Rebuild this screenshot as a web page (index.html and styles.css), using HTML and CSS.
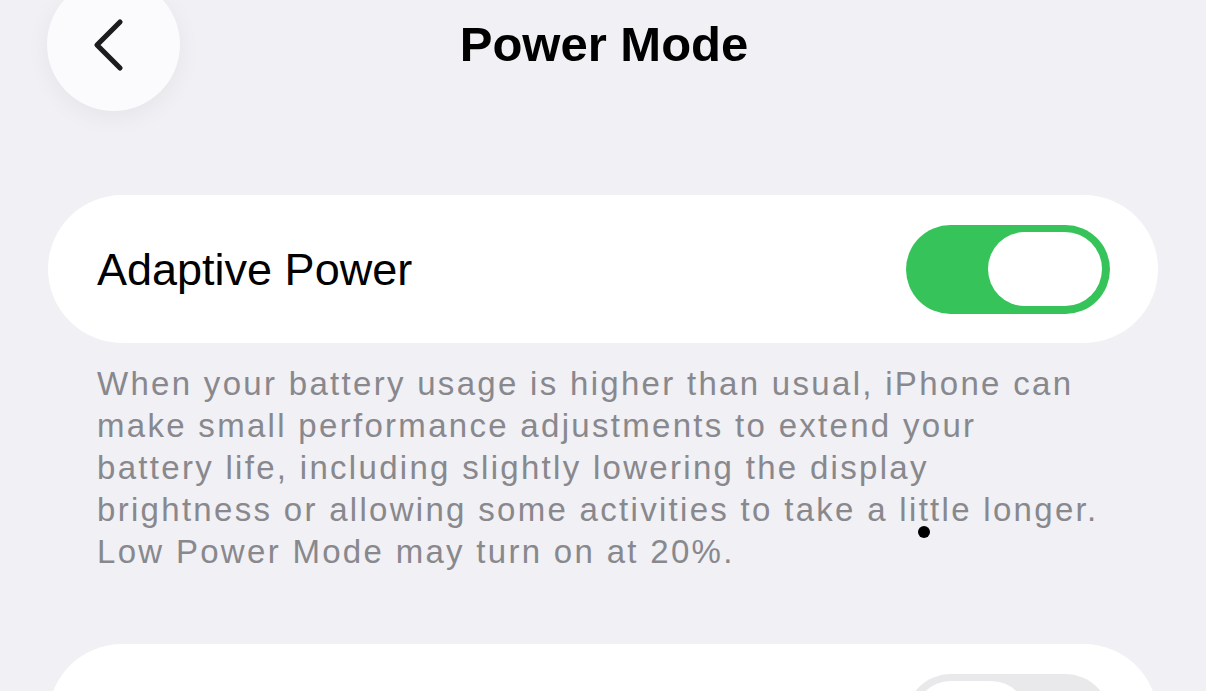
FILE: index.html
```html
<!DOCTYPE html>
<html lang="en">
<head>
    <meta charset="UTF-8">
    <title>Power Mode</title>
    <link rel="stylesheet" href="styles.css">
</head>
<body>
<div class="page">
    <div class="nav">
        <div class="nav-side">
            <span class="back-btn">
                <svg width="40" height="60" viewBox="0 0 40 60">
                    <path d="M31 8 L8 31 L31 54" fill="none" stroke="#1c1c1e" stroke-width="5.2" stroke-linecap="round" stroke-linejoin="round"/>
                </svg>
            </span>
        </div>
        <h1 class="nav-title">Power Mode</h1>
        <div class="nav-side"></div>
    </div>

    <div class="group">
        <span class="row-label">Adaptive Power</span>
        <span class="switch on"><span class="knob"></span></span>
    </div>
    <p class="footer">
        When your battery usage is higher than usual, iPhone can<br>
        make small performance adjustments to extend your<br>
        battery life, including slightly lowering the display<br>
        brightness or allowing some activities to take a little longer.<br>
        Low Power Mode may turn on at 20%.
    </p>

    <div class="group group-next">
        <span class="switch"><span class="knob"></span></span>
    </div>

    <span class="touch-dot"></span>
</div>
</body>
</html>
```

FILE: styles.css
```css
* {
    margin: 0;
    padding: 0;
    box-sizing: border-box;
}

html, body {
    height: 100%;
    overflow: hidden;
    background-color: #f0f0f5;
}

.page {
    position: relative;
    height: 691px;
    font-family: "Liberation Sans", Arial, sans-serif;
    color: #000;
}

/* top bar, the round back button hangs over the top edge */
.nav {
    height: 88px;
    display: grid;
    grid-template-columns: 1fr auto 1fr;
    grid-template-rows: 88px;
    align-items: center;
}

.nav-side {
    height: 88px;
    display: flex;
    align-items: center;
    padding-left: 47px;
}

.back-btn {
    flex: none;
    width: 133px;
    height: 133px;
    border-radius: 50%;
    background-color: #fbfbfd;
    box-shadow: 0 6px 24px rgba(0, 0, 0, 0.05);
    display: flex;
    align-items: center;
    justify-content: center;
    padding-right: 10px;
}

.nav-title {
    font-size: 49px;
    font-weight: 700;
    padding-left: 2px;
}

/* grouped rows */
.group {
    margin: 107px 48px 0;
    height: 148px;
    border-radius: 74px;
    background-color: #fff;
    display: flex;
    align-items: center;
    justify-content: space-between;
    padding: 0 48px 0 49px;
}

.group-next {
    margin-top: 71px;
    justify-content: flex-end;
}

.row-label {
    font-size: 45px;
    padding-top: 2px;
}

.switch {
    width: 204px;
    height: 89px;
    border-radius: 45px;
    background-color: #e9e9eb;
    display: flex;
    align-items: center;
    padding: 0 8px;
}

.switch .knob {
    width: 114px;
    height: 74px;
    border-radius: 37px;
    background-color: #fff;
}

.switch.on {
    background-color: #36c45a;
    justify-content: flex-end;
}

.footer {
    margin: 20px 48px 0;
    padding-left: 49px;
    font-size: 33px;
    line-height: 42px;
    color: #88888d;
    letter-spacing: 2.3px;
    white-space: nowrap;
}

.touch-dot {
    position: absolute;
    left: 918px;
    top: 526px;
    width: 12px;
    height: 12px;
    border-radius: 50%;
    background-color: #000;
}
```
